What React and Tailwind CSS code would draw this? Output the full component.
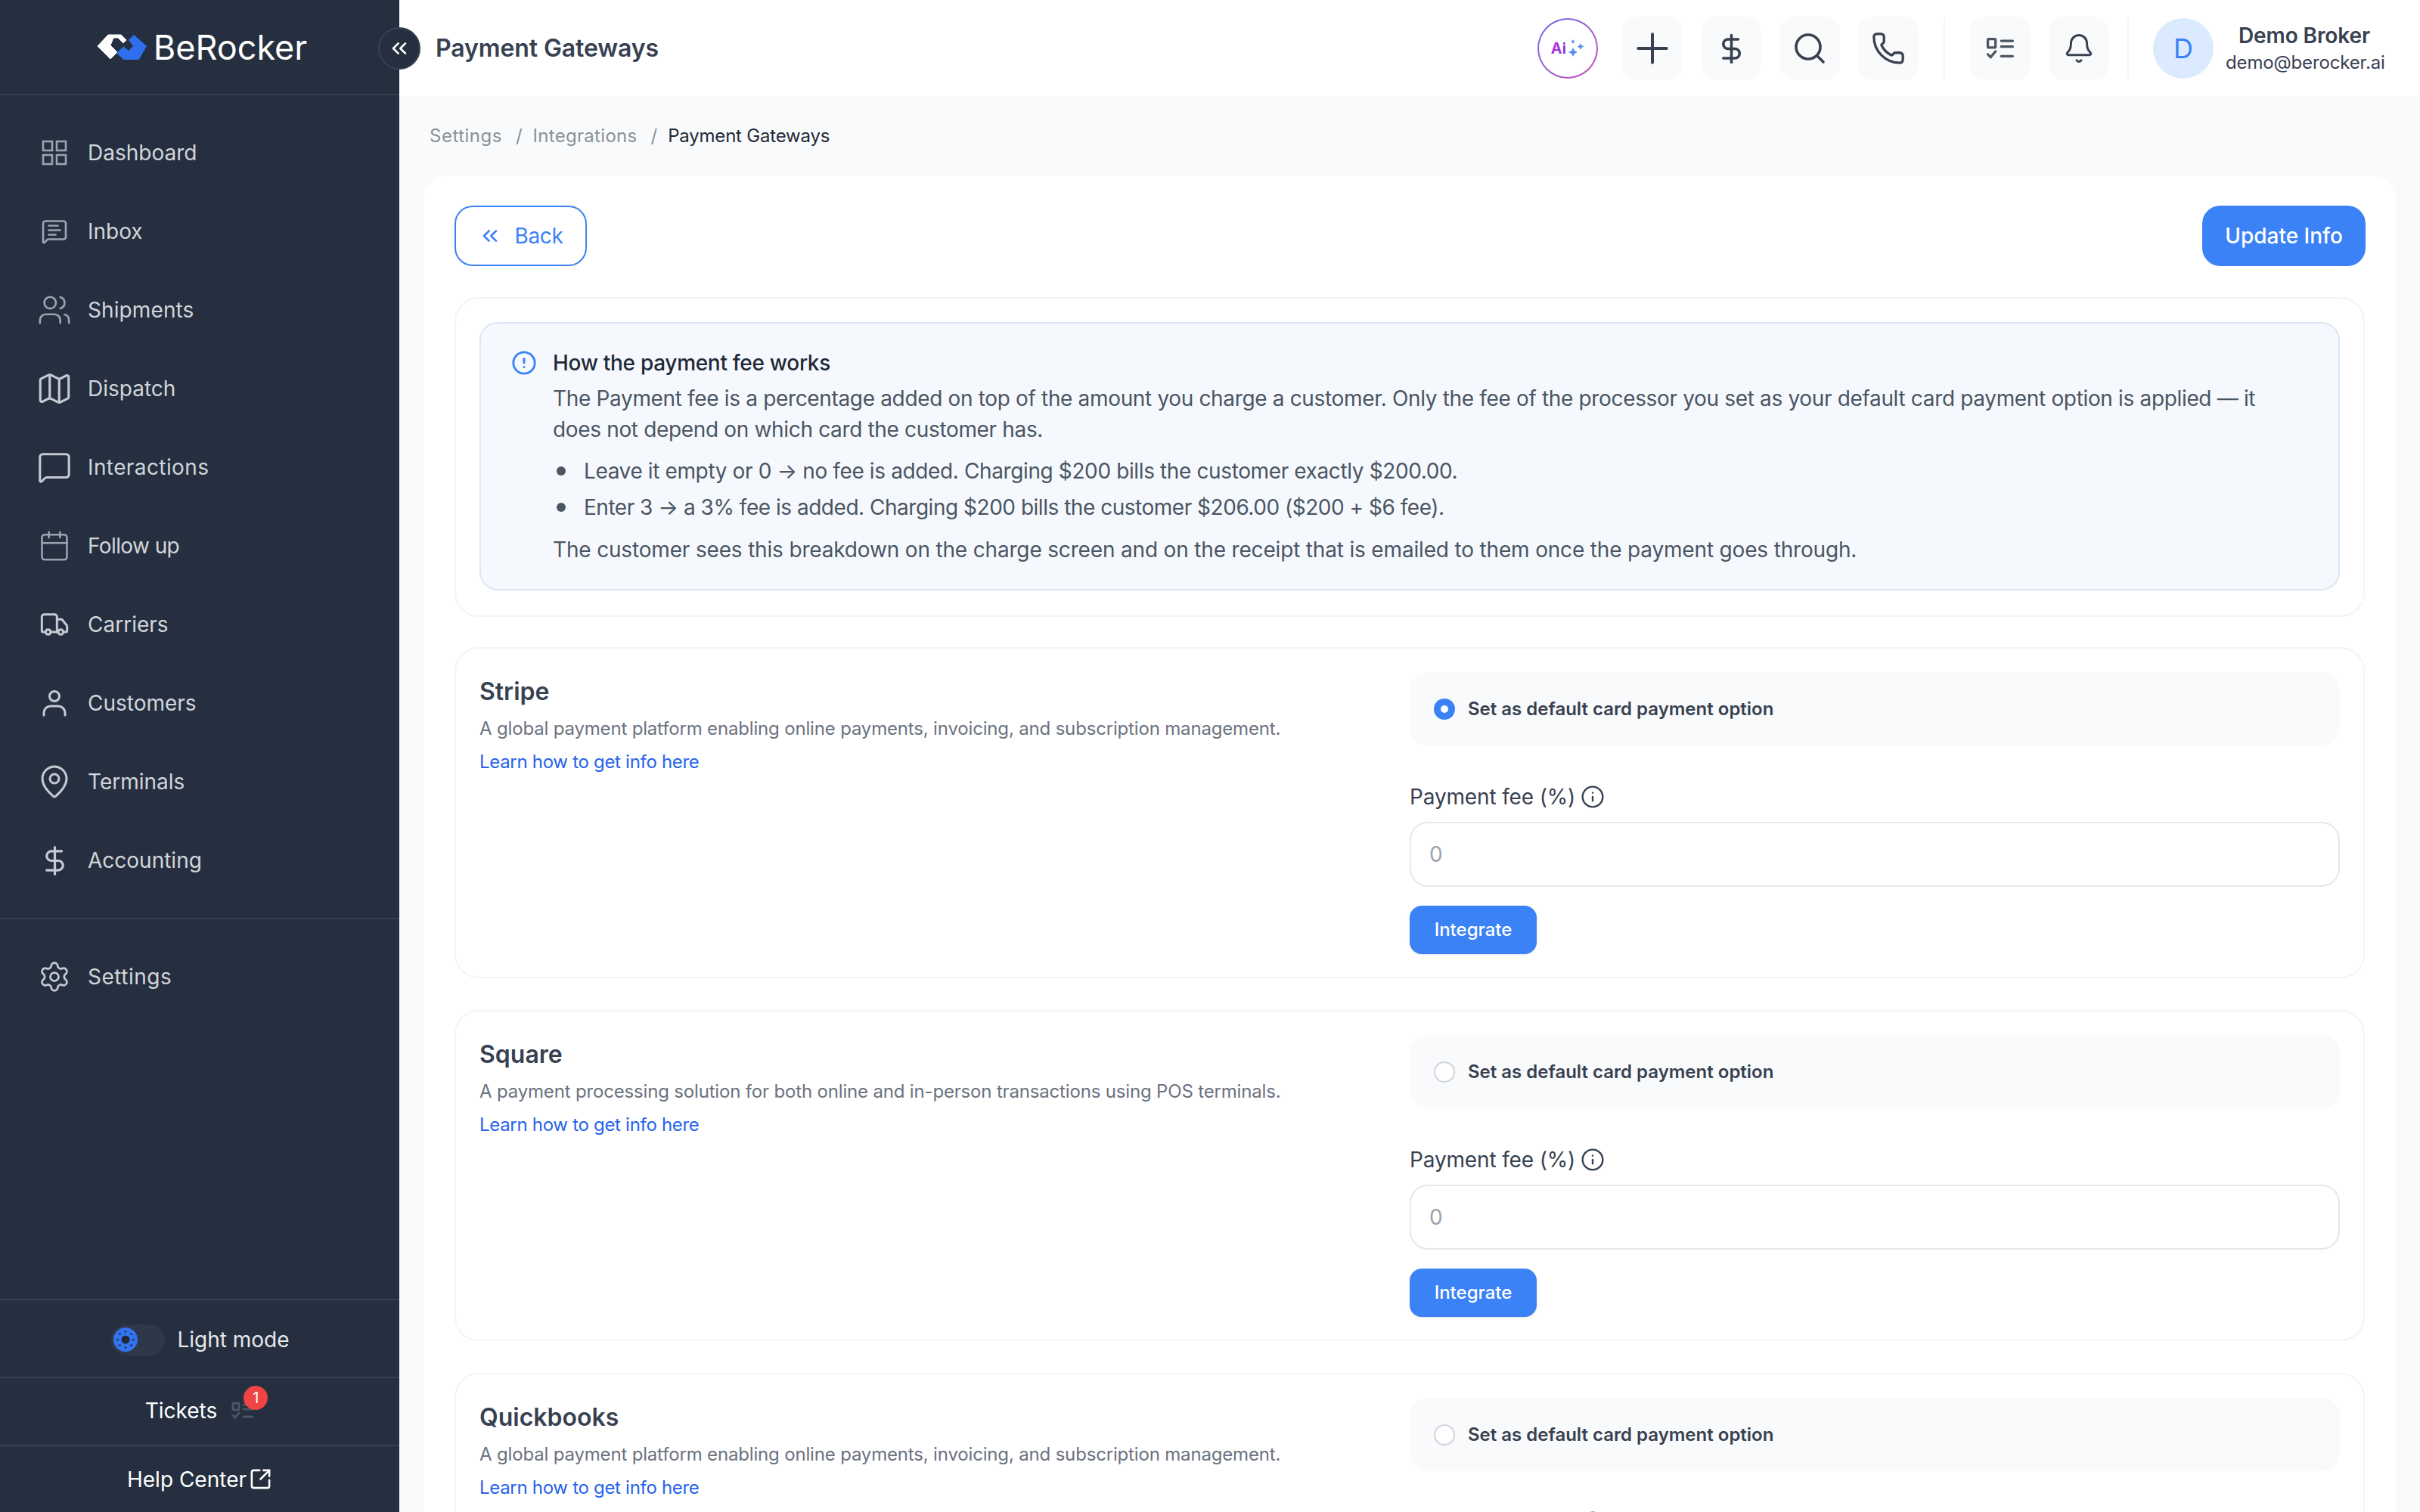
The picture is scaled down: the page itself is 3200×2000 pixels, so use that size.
import React from "react";
import {
  MessageSquareText, Users, Map, MessageSquare, Calendar, Truck, MapPin, DollarSign, Settings,
  ChevronsLeft, Plus, Search, Phone, Bell, Info, CircleAlert, SquareArrowOutUpRight,
} from "lucide-react";

const DashIcon = () => (
  <svg width="34" height="34" viewBox="0 0 34 34" fill="none" stroke="#9ca3af" strokeWidth="2.6">
    <rect x="2" y="2" width="12" height="12" /><rect x="20" y="2" width="12" height="12" />
    <rect x="2" y="20" width="12" height="12" /><rect x="20" y="20" width="12" height="12" />
  </svg>
);
const UserIcon = () => (
  <svg width="32" height="36" viewBox="0 0 32 36" fill="none" stroke="#c4c9d2" strokeWidth="3" strokeLinecap="round">
    <circle cx="16" cy="9" r="6.5" /><path d="M2 34v-3a9 9 0 0 1 9-9h10a9 9 0 0 1 9 9v3" />
  </svg>
);
const Tasks = ({ c, w = 30, sw = 3 }) => (
  <svg width={w} height={w * 0.8} viewBox="0 0 30 24" fill="none" stroke={c} strokeWidth={sw} strokeLinecap="round">
    <rect x="2" y="2" width="8" height="9" rx="1" /><path d="M16 4h12M16 10h12M16 20h12M2 18l3 3 5-6" />
  </svg>
);
const Logo = () => (
  <svg width="67" height="35" viewBox="0 0 67 35" strokeLinejoin="round">
    <path d="M1 16 15 1h17l7 7-4 4-7-7h-6l-4 10 9 9-9 9z" fill="#fff" stroke="#fff" strokeWidth="1" />
    <path d="M65.500 16 49 1.500 42.500 8l6 8-6.500 6.500-6.500-5.500L26.500 25l9 8.500h20z" fill="#2f6fed" stroke="#2f6fed" strokeWidth="1" />
  </svg>
);
const SunKnob = () => (
  <svg width="26" height="26" viewBox="0 0 26 26" fill="#1f2937">
    <circle cx="13" cy="13" r="5.500" />
    {[[13, 2.500], [13, 23.500], [2.500, 13], [23.500, 13], [5.500, 5.500], [20.500, 5.500], [5.500, 20.500], [20.500, 20.500]].map(([x, y]) => (
      <circle key={`${x}-${y}`} cx={x} cy={y} r="1.300" />
    ))}
  </svg>
);

const nav = [
  ["Dashboard", <DashIcon />, ""],
  ["Inbox", <MessageSquareText size={36} color="#9ca3af" strokeWidth={1.8} />, ""],
  ["Shipments", <Users size={46} color="#9ca3af" strokeWidth={1.4} />, "tracking-[0.1px]"],
  ["Dispatch", <Map size={50} color="#c4c9d2" strokeWidth={1.5} />, ""],
  ["Interactions", <MessageSquare size={46} color="#c4c9d2" strokeWidth={1.6} />, "tracking-[0.4px]"],
  ["Follow up", <Calendar size={44} color="#9ca3af" strokeWidth={1.4} />, "tracking-[-0.6px]"],
  ["Carriers", <Truck size={40} color="#c4c9d2" strokeWidth={1.8} />, ""],
  ["Customers", <UserIcon />, ""],
  ["Terminals", <MapPin size={48} color="#c4c9d2" strokeWidth={1.5} />, ""],
  ["Accounting", <DollarSign size={43} color="#c4c9d2" strokeWidth={1.8} />, ""],
];

const NavRow = ({ label, icon, cls = "" }) => (
  <div className="flex h-[104px] items-center">
    <div className="flex w-[144px] items-center justify-center">{icon}</div>
    <span className={`-ml-[28px] text-[28px] leading-[40px] text-[#d1d5db] ${cls}`}>{label}</span>
  </div>
);

const HeadBtn = ({ children }) => (
  <div className="flex h-[84px] w-[80px] items-center justify-center rounded-[20px] bg-[#f9fafb]">{children}</div>
);

const Gateway = ({ name, desc, checked }) => (
  <div className="flex rounded-[32px] border-2 border-[#f3f4f6] px-[31px] pt-[31px] pb-[30px]">
    <div className="flex-1 pt-[6px]">
      <div className="text-[32px] font-semibold leading-[40px] text-[#374151]">{name}</div>
      <div className="mt-[11px] text-[24px] leading-[36px] tracking-[-0.17px] text-[#6b7280]">{desc}</div>
      <div className="mt-[8px] text-[24px] leading-[36px] tracking-[-0.3px] text-[#2563eb]">Learn how to get info here</div>
    </div>
    <div className="w-[1230px] shrink-0">
      <div className="flex h-[97px] items-center gap-[17px] rounded-[24px] bg-[#f9fafb] pl-[32px]">
        {checked ? (
          <div className="flex h-[28px] w-[28px] items-center justify-center rounded-full bg-[#3b82f6]">
            <div className="h-[10px] w-[10px] rounded-full bg-white" />
          </div>
        ) : (
          <div className="h-[28px] w-[28px] rounded-full border-2 border-[#d1d5db] bg-white" />
        )}
        <span className="text-[24px] font-semibold leading-[36px] text-[#374151]">Set as default card payment option</span>
      </div>
      <div className="mt-[51px] flex h-[34px] items-center gap-[7px] text-[28px] leading-[34px] tracking-[-0.15px] text-[#374151]">
        Payment fee (%) <Info size={32} color="#374151" strokeWidth={1.8} />
      </div>
      <div className="mt-[16px] flex h-[86px] items-center rounded-[24px] border-2 border-[#e5e7eb] pl-[32px] text-[28px] text-[#9ca3af]">
        <span className="-ml-[8px]">0</span>
      </div>
      <button className="mt-[25px] flex h-[64px] w-[168px] items-center justify-center rounded-[16px] bg-[#3b82f6] text-[24px] font-medium text-white shadow-sm">Integrate</button>
    </div>
  </div>
);

const Bullet = ({ children, cls }) => (
  <li className={`flex items-center gap-[24px] pl-[5px] leading-[40px] ${cls}`}>
    <span className="h-[12px] w-[12px] shrink-0 rounded-full bg-[#4b5563]" />
    <span>{children}</span>
  </li>
);

export default function App() {
  return (
    <div className="flex h-screen w-full overflow-hidden bg-[#f9fafb] font-[Inter,sans-serif]">
      <aside className="relative flex h-full w-[528px] shrink-0 flex-col bg-[#252f3f]">
        <div className="flex h-[126px] items-center justify-center gap-[8px] border-b-2 border-[#374151] pl-[6px]">
          <Logo />
          <span className="text-[45px] font-normal leading-none text-white">BeRocker</span>
        </div>
        <div className="absolute left-[500px] top-[36px] flex h-[56px] w-[56px] items-center justify-center rounded-full border-2 border-[#374151] bg-[#252f3f]">
          <ChevronsLeft size={32} color="#fff" strokeWidth={2} />
        </div>
        <nav className="border-b-2 border-[#374151] pt-[24px] pb-[24px]">
          {nav.map(([l, i, c]) => <NavRow key={l} label={l} icon={i} cls={c} />)}
        </nav>
        <div className="flex-1 pt-[24px]">
          <NavRow label="Settings" cls="tracking-[0.5px]" icon={<Settings size={44} color="#c4c9d2" strokeWidth={1.5} />} />
        </div>
        <div className="flex h-[103px] items-center justify-center gap-[16px] border-t-2 border-[#374151] pl-[2px] pt-[3px]">
          <div className="flex h-[41px] w-[71px] items-center rounded-full bg-[#2e3848] pl-[3px]">
            <div className="flex h-[32px] w-[32px] items-center justify-center rounded-full bg-[#3274f0]">
              <SunKnob />
            </div>
          </div>
          <span className="text-[28px] leading-[40px] text-[#e5e7eb]">Light mode</span>
        </div>
        <div className="flex h-[90px] items-center justify-center gap-[19px] border-t-2 border-[#374151] pb-[3px]">
          <span className="text-[28px] leading-[40px] text-white">Tickets</span>
          <div className="relative">
            <Tasks c="#4b5563" />
            <div className="absolute -right-[18px] -top-[21px] flex h-[32px] w-[32px] items-center justify-center rounded-full bg-[#ef4444] text-[20px] leading-none text-white">1</div>
          </div>
        </div>
        <div className="flex h-[89px] items-center justify-center gap-[3px] border-t-2 border-[#374151]">
          <span className="text-[28px] leading-[40px] text-white">Help Center</span>
          <SquareArrowOutUpRight size={31} color="#fff" strokeWidth={2} />
        </div>
      </aside>

      <main className="flex h-full min-w-0 flex-1 flex-col">
        <header className="flex h-[128px] shrink-0 items-center justify-between bg-white pl-[48px] pr-[49px]">
          <h1 className="text-[32px] font-semibold leading-[40px] tracking-[-0.1px] text-[#374151]">Payment Gateways</h1>
          <div className="flex items-center">
            <div className="mr-[32px] h-[80px] w-[80px] rounded-full bg-gradient-to-br from-[#6a6ae8] to-[#c84db8] p-[2px]">
              <div className="flex h-full w-full items-center justify-center gap-[2px] rounded-full bg-white">
                <span className="bg-gradient-to-r from-[#c026d3] to-[#7c3aed] bg-clip-text text-[20px] font-bold text-transparent">Ai</span>
                <svg width="22" height="24" viewBox="0 0 22 24" fill="#5b8def">
                  <path d="M7 11l2 4 4 2-4 2-2 4-2-4-4-2 4-2zM17 5l1.500 3 3 1.500-3 1.500L17 14l-1.500-3-3-1.500 3-1.500zM7 0l1 2 2 1-2 1-1 2-1-2-2-1 2-1z" />
                </svg>
              </div>
            </div>
            <div className="flex gap-[24px]">
              <HeadBtn><Plus size={64} color="#374151" strokeWidth={1.5} /></HeadBtn>
              <HeadBtn><DollarSign size={43} color="#374151" strokeWidth={2} /></HeadBtn>
              <HeadBtn><Search size={48} color="#374151" strokeWidth={1.8} /></HeadBtn>
              <HeadBtn><Phone size={46} color="#374151" strokeWidth={1.7} /></HeadBtn>
            </div>
            <div className="mx-[33px] h-[80px] w-[2px] bg-[#f3f4f6]" />
            <div className="flex gap-[24px]">
              <HeadBtn><Tasks c="#4b5563" w={38} sw={2.6} /></HeadBtn>
              <HeadBtn><Bell size={42} color="#374151" strokeWidth={1.7} /></HeadBtn>
            </div>
            <div className="ml-[24px] mr-[32px] h-[80px] w-[2px] bg-[#f3f4f6]" />
            <div className="flex h-[80px] w-[80px] items-center justify-center rounded-full bg-[#dbeafe] text-[36px] text-[#3b82f6]">D</div>
            <div className="ml-[16px] w-[208px] pt-[2px] text-center">
              <div className="text-[28px] font-semibold leading-[36px] tracking-[-0.1px] text-[#374151]">Demo Broker</div>
              <div className="text-[24px] leading-[36px] tracking-[-0.15px] text-[#374151]">demo@berocker.ai</div>
            </div>
          </div>
        </header>

        <div className="flex items-center pl-[40px] pt-[36px] text-[24px] leading-[32px] text-[#8a9099]">
          <span className="tracking-[0.5px]">Settings</span>
          <span className="ml-[18px] mr-[14px]">/</span>
          <span className="tracking-[0.3px]">Integrations</span>
          <span className="ml-[18px] mr-[14px]">/</span>
          <span className="tracking-[-0.2px] text-[#1f2937]">Payment Gateways</span>
        </div>

        <section className="ml-[32px] mr-[32px] mt-[36px] flex-1 rounded-t-[32px] bg-white px-[41px] pt-[40px]">
          <div className="flex items-center justify-between">
            <button className="flex h-[80px] w-[175px] items-center justify-center gap-[16px] rounded-[24px] border-2 border-[#3b82f6] text-[28px] tracking-[-0.3px] text-[#3b82f6]">
              <ChevronsLeft size={32} color="#3b82f6" strokeWidth={2} /> Back
            </button>
            <button className="-mr-[1px] h-[80px] w-[216px] rounded-[24px] bg-[#3b82f6] text-[28px] font-medium text-white">Update Info</button>
          </div>

          <div className="mt-[41px] rounded-[32px] border-2 border-[#f3f4f6] px-[31px] pt-[31px] pb-[33px]">
            <div className="flex gap-[21px] rounded-[24px] border-2 border-[#dbe7f5] bg-[#f5f9fe] py-[32px] pl-[40px] pr-[60px]">
              <CircleAlert size={34} color="#3b82f6" strokeWidth={2} className="mt-[3px] shrink-0" />
              <div className="text-[28px] leading-[41px] text-[#4b5563]">
                <div className="font-medium leading-[40px] tracking-[-0.3px] text-[#1f2937]">How the payment fee works</div>
                <p className="mt-[7px] tracking-[-0.34px]">The Payment fee is a percentage added on top of the amount you charge a customer. Only the fee of the processor you set as your default card payment option is applied — it does not depend on which card the customer has.</p>
                <ul className="mt-[14px] flex flex-col gap-[8px]">
                  <Bullet cls="tracking-[-0.38px]">Leave it empty or 0 → no fee is added. Charging $200 bills the customer exactly $200.00.</Bullet>
                  <Bullet cls="tracking-[-0.48px]">Enter 3 → a 3% fee is added. Charging $200 bills the customer $206.00 ($200 + $6 fee).</Bullet>
                </ul>
                <p className="mt-[16px] leading-[40px] tracking-[-0.17px]">The customer sees this breakdown on the charge screen and on the receipt that is emailed to them once the payment goes through.</p>
              </div>
            </div>
          </div>

          <div className="mt-[40px] flex flex-col gap-[42px]">
            <Gateway name="Stripe" checked desc="A global payment platform enabling online payments, invoicing, and subscription management." />
            <Gateway name="Square" desc="A payment processing solution for both online and in-person transactions using POS terminals." />
            <Gateway name="Quickbooks" desc="A global payment platform enabling online payments, invoicing, and subscription management." />
          </div>
        </section>
      </main>
    </div>
  );
}
